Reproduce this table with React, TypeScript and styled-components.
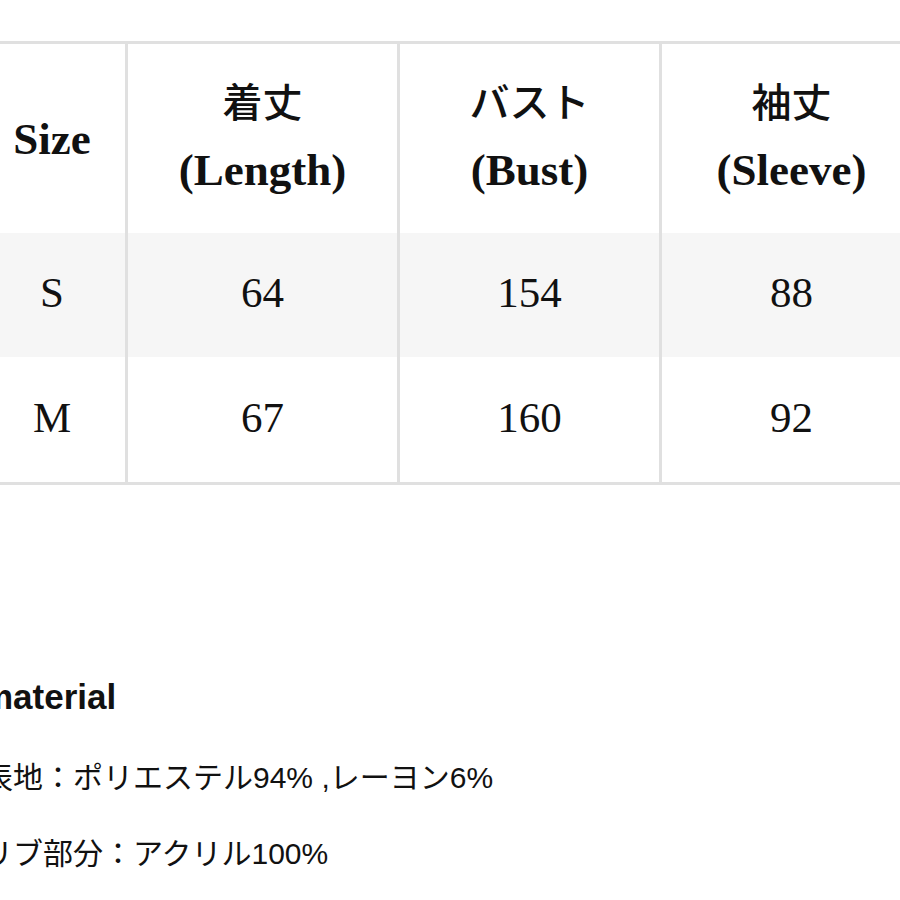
import React from "react";
import styled, { createGlobalStyle } from "styled-components";

const Global = createGlobalStyle`
  html, body { margin: 0; padding: 0; background: #ffffff; }
  body { width: 900px; height: 900px; overflow: hidden; }
`;

const Page = styled.div`
  width: 900px;
  height: 900px;
  overflow: hidden;
  padding-top: 41px;
  box-sizing: border-box;
  color: #111111;
`;

const Table = styled.div`
  display: grid;
  grid-template-columns: 146px 272px 262px 262px;
  margin-left: -21px;
  width: 942px;
  border-top: 3px solid #e0e0e0;
  border-bottom: 3px solid #e0e0e0;
`;

const Cell = styled.div<{ $first?: boolean; $shade?: boolean; $h: number }>`
  box-sizing: border-box;
  height: ${(p) => p.$h}px;
  border-left: ${(p) => (p.$first ? "none" : "3px solid #e0e0e0")};
  background: ${(p) => (p.$shade ? "#f6f6f6" : "#ffffff")};
  display: flex;
  flex-direction: column;
  align-items: center;
  justify-content: center;
  font-family: "Liberation Serif", "Noto Sans CJK JP", serif;
  font-size: 43px;
  color: #111111;
`;

const HeadLatin = styled.div`
  font-weight: 700;
  font-size: 45px;
  line-height: 66px;
`;

const HeadJa = styled.div`
  font-family: "Noto Sans CJK JP", sans-serif;
  font-weight: 500;
  font-size: 40px;
  line-height: 53px;
  padding-bottom: 10px;
`;

const Value = styled.div`
  line-height: 50px;
  padding-bottom: 4px;
`;

const Material = styled.section`
  margin-top: 192px;
  margin-left: -17px;
  font-family: "Liberation Sans", "Noto Sans CJK JP", sans-serif;
  color: #111111;
`;

const Heading = styled.div`
  font-weight: 700;
  font-size: 35px;
  line-height: 40px;
  margin-bottom: 23px;
  margin-left: -1px;
`;

const Line = styled.div`
  font-size: 30px;
  line-height: 76px;
  white-space: nowrap;
`;

const headers: [string, string][] = [
  ["着丈", "(Length)"],
  ["バスト", "(Bust)"],
  ["袖丈", "(Sleeve)"],
];

const rows = [
  { size: "S", vals: ["64", "154", "88"], shade: true, h: 124 },
  { size: "M", vals: ["67", "160", "92"], shade: false, h: 125 },
];

export default function App() {
  return (
    <>
      <Global />
      <Page>
        <Table>
          <Cell $first $h={189}>
            <HeadLatin>Size</HeadLatin>
          </Cell>
          {headers.map(([ja, en]) => (
            <Cell key={en} $h={189}>
              <HeadJa>{ja}</HeadJa>
              <HeadLatin>{en}</HeadLatin>
            </Cell>
          ))}
          {rows.map((r) => (
            <React.Fragment key={r.size}>
              <Cell $first $shade={r.shade} $h={r.h}>
                <Value>{r.size}</Value>
              </Cell>
              {r.vals.map((v, i) => (
                <Cell key={i} $shade={r.shade} $h={r.h}>
                  <Value>{v}</Value>
                </Cell>
              ))}
            </React.Fragment>
          ))}
        </Table>
        <Material>
          <Heading>material</Heading>
          <Line>表地：ポリエステル94% ,レーヨン6%</Line>
          <Line>リブ部分：アクリル100%</Line>
        </Material>
      </Page>
    </>
  );
}
